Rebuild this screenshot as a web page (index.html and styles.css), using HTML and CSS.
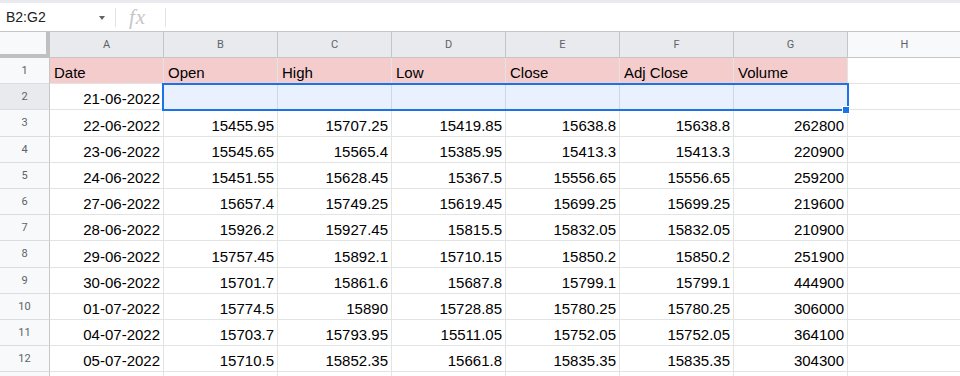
FILE: index.html
```html
<!DOCTYPE html>
<html lang="en">
<head>
    <meta charset="UTF-8">
    <title>Sheet</title>
    <link rel="stylesheet" href="styles.css">
</head>
<body>
    <div class="top_strip"></div>
    <div class="formula_bar">
        <div class="name_box">
            <span>B2:G2</span>
            <i class="caret"></i>
        </div>
        <div class="sep"></div>
        <div class="fx">fx</div>
        <div class="sep"></div>
    </div>

    <div class="sheet">
        <!-- column headers -->
        <div class="corner"></div>
        <div class="col_head sel">A</div>
        <div class="col_head sel">B</div>
        <div class="col_head sel">C</div>
        <div class="col_head sel">D</div>
        <div class="col_head sel">E</div>
        <div class="col_head sel">F</div>
        <div class="col_head sel">G</div>
        <div class="col_head">H</div>

        <div class="row_head">1</div>
        <div class="cell title">Date</div>
        <div class="cell title">Open</div>
        <div class="cell title">High</div>
        <div class="cell title">Low</div>
        <div class="cell title">Close</div>
        <div class="cell title">Adj Close</div>
        <div class="cell title">Volume</div>
        <div class="cell"></div>

        <div class="row_head sel">2</div>
        <div class="cell num">21-06-2022</div>
        <div class="cell"></div>
        <div class="cell"></div>
        <div class="cell"></div>
        <div class="cell"></div>
        <div class="cell"></div>
        <div class="cell"></div>
        <div class="cell"></div>

        <div class="row_head">3</div>
        <div class="cell num">22-06-2022</div>
        <div class="cell num">15455.95</div>
        <div class="cell num">15707.25</div>
        <div class="cell num">15419.85</div>
        <div class="cell num">15638.8</div>
        <div class="cell num">15638.8</div>
        <div class="cell num">262800</div>
        <div class="cell"></div>

        <div class="row_head">4</div>
        <div class="cell num">23-06-2022</div>
        <div class="cell num">15545.65</div>
        <div class="cell num">15565.4</div>
        <div class="cell num">15385.95</div>
        <div class="cell num">15413.3</div>
        <div class="cell num">15413.3</div>
        <div class="cell num">220900</div>
        <div class="cell"></div>

        <div class="row_head">5</div>
        <div class="cell num">24-06-2022</div>
        <div class="cell num">15451.55</div>
        <div class="cell num">15628.45</div>
        <div class="cell num">15367.5</div>
        <div class="cell num">15556.65</div>
        <div class="cell num">15556.65</div>
        <div class="cell num">259200</div>
        <div class="cell"></div>

        <div class="row_head">6</div>
        <div class="cell num">27-06-2022</div>
        <div class="cell num">15657.4</div>
        <div class="cell num">15749.25</div>
        <div class="cell num">15619.45</div>
        <div class="cell num">15699.25</div>
        <div class="cell num">15699.25</div>
        <div class="cell num">219600</div>
        <div class="cell"></div>

        <div class="row_head">7</div>
        <div class="cell num">28-06-2022</div>
        <div class="cell num">15926.2</div>
        <div class="cell num">15927.45</div>
        <div class="cell num">15815.5</div>
        <div class="cell num">15832.05</div>
        <div class="cell num">15832.05</div>
        <div class="cell num">210900</div>
        <div class="cell"></div>

        <div class="row_head">8</div>
        <div class="cell num">29-06-2022</div>
        <div class="cell num">15757.45</div>
        <div class="cell num">15892.1</div>
        <div class="cell num">15710.15</div>
        <div class="cell num">15850.2</div>
        <div class="cell num">15850.2</div>
        <div class="cell num">251900</div>
        <div class="cell"></div>

        <div class="row_head">9</div>
        <div class="cell num">30-06-2022</div>
        <div class="cell num">15701.7</div>
        <div class="cell num">15861.6</div>
        <div class="cell num">15687.8</div>
        <div class="cell num">15799.1</div>
        <div class="cell num">15799.1</div>
        <div class="cell num">444900</div>
        <div class="cell"></div>

        <div class="row_head">10</div>
        <div class="cell num">01-07-2022</div>
        <div class="cell num">15774.5</div>
        <div class="cell num">15890</div>
        <div class="cell num">15728.85</div>
        <div class="cell num">15780.25</div>
        <div class="cell num">15780.25</div>
        <div class="cell num">306000</div>
        <div class="cell"></div>

        <div class="row_head">11</div>
        <div class="cell num">04-07-2022</div>
        <div class="cell num">15703.7</div>
        <div class="cell num">15793.95</div>
        <div class="cell num">15511.05</div>
        <div class="cell num">15752.05</div>
        <div class="cell num">15752.05</div>
        <div class="cell num">364100</div>
        <div class="cell"></div>

        <div class="row_head">12</div>
        <div class="cell num">05-07-2022</div>
        <div class="cell num">15710.5</div>
        <div class="cell num">15852.35</div>
        <div class="cell num">15661.8</div>
        <div class="cell num">15835.35</div>
        <div class="cell num">15835.35</div>
        <div class="cell num">304300</div>
        <div class="cell"></div>

        <!-- row 13, only its top edge shows -->
        <div class="row_head"></div>
        <div class="cell"></div>
        <div class="cell"></div>
        <div class="cell"></div>
        <div class="cell"></div>
        <div class="cell"></div>
        <div class="cell"></div>
        <div class="cell"></div>
        <div class="cell"></div>

        <!-- selection B2:G2 -->
        <div class="selection"></div>
        <div class="fill_handle"></div>
    </div>
</body>
</html>
```

FILE: styles.css
```css
*{
    padding: 0;
    margin: 0;
    box-sizing: border-box;
}
html,body{
    width: 100%;
    height: 100%;
    overflow: hidden;
    background-color: #fff;
    font-family: "Liberation Sans", Arial, sans-serif;
}
.top_strip{
    height: 3px;
    background-color: #e9ebee;
}
.formula_bar{
    height: 28px;
    display: flex;
    align-items: center;
}
.name_box{
    width: 115px;
    display: flex;
    align-items: center;
    justify-content: space-between;
    padding: 0 10px 0 6px;
    font-size: 14px;
    color: #202124;
}
.caret{
    width: 0;
    height: 0;
    border-left: 3.5px solid transparent;
    border-right: 3.5px solid transparent;
    border-top: 4px solid #5f6368;
    margin-top: 1px;
}
.sep{
    width: 1px;
    height: 19px;
    background-color: #e1e3e6;
}
.fx{
    width: 49px;
    padding-left: 13px;
    font-family: "Liberation Serif", "Times New Roman", serif;
    font-style: italic;
    font-size: 21px;
    color: #c4c6c9;
    line-height: 28px;
    letter-spacing: 1px;
}
.sheet{
    position: relative;
    width: 961px;
    border-top: 1px solid #c4c7c5;
    display: grid;
    grid-template-columns: 50px repeat(8, 114px);
    grid-template-rows: 26px;
    grid-auto-rows: 26.2px;
}
.corner{
    background-color: #f8f9fa;
    border-right: 4px solid #c0c0c0;
    border-bottom: 4px solid #c0c0c0;
}
.col_head{
    background-color: #f8f9fa;
    border-right: 1px solid #c4c7c5;
    border-bottom: 1px solid #c4c7c5;
    display: flex;
    align-items: center;
    justify-content: center;
    font-family: Roboto, "Liberation Sans", sans-serif;
    font-size: 11px;
    color: #5f6368;
}
.row_head{
    background-color: #f8f9fa;
    border-right: 1px solid #c4c7c5;
    border-bottom: 1px solid #dadce0;
    display: flex;
    align-items: center;
    justify-content: center;
    font-family: Roboto, "Liberation Sans", sans-serif;
    font-size: 11px;
    color: #5f6368;
}
.col_head.sel,.row_head.sel{
    background-color: #e8eaed;
}
.cell{
    border-right: 1px solid #e2e3e3;
    border-bottom: 1px solid #e2e3e3;
    display: flex;
    align-items: flex-end;
    padding: 0 4px 2px 4px;
    font-size: 15px;
    line-height: 17px;
    color: #000;
    white-space: nowrap;
    overflow: hidden;
}
.cell.num{
    justify-content: flex-end;
    padding-right: 3px;
}
.cell.title{
    background-color: #f4cccc;
}
.selection{
    position: absolute;
    left: 162px;
    top: 51px;
    width: 687px;
    height: 28px;
    border: 2px solid #1a73e8;
    background-color: rgba(26,115,232,0.1);
}
.fill_handle{
    position: absolute;
    left: 842px;
    top: 74px;
    width: 8px;
    height: 8px;
    background-color: #1a73e8;
    border: 1px solid #fff;
}
```
